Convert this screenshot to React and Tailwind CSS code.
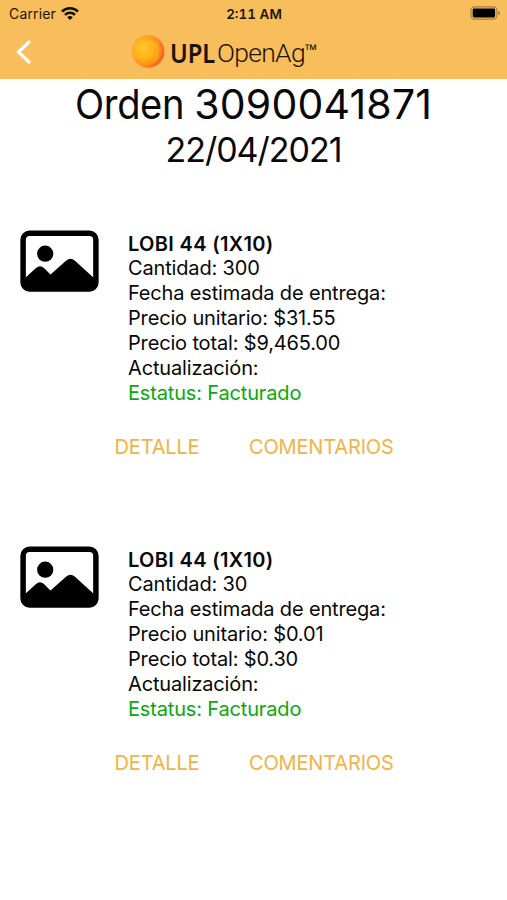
import React from "react";

const orders = [
  { name: "LOBI 44 (1X10)", qty: "300", unit: "$31.55", total: "$9,465.00" },
  { name: "LOBI 44 (1X10)", qty: "30", unit: "$0.01", total: "$0.30" },
];

const WifiIcon = () => (
  <svg width="18" height="14" viewBox="0 0 18 14" fill="none" stroke="#100c04" strokeWidth="2.5">
    <path d="M1 4.6a11.4 11.4 0 0 1 16 0" />
    <path d="M4 7.9a7.1 7.1 0 0 1 10 0" />
    <path d="M9 13.1 6.2 10.3a4 4 0 0 1 5.6 0Z" fill="#100c04" stroke="none" />
  </svg>
);

const BatteryIcon = () => (
  <svg width="31" height="14" viewBox="0 0 31 14">
    <rect x="0.9" y="0.8" width="26" height="12.4" rx="3.6" fill="none" stroke="#a87e3a" strokeWidth="1.2" />
    <rect x="2.7" y="2.6" width="22.4" height="8.8" rx="1.3" fill="#000" />
    <path d="M28.2 4.9c2.6.8 2.6 3.4 0 4.2Z" fill="#a87e3a" />
  </svg>
);

const Sun = () => (
  <svg width="36" height="36" viewBox="0 0 36 36">
    <defs>
      <radialGradient id="sun" cx="0.36" cy="0.42" r="0.68">
        <stop offset="0" stopColor="#ffc62c" />
        <stop offset="0.45" stopColor="#ffb31a" />
        <stop offset="0.78" stopColor="#fd8a10" />
        <stop offset="1" stopColor="#f04a22" />
      </radialGradient>
      <radialGradient id="halo">
        <stop offset="0.85" stopColor="#f0846a" stopOpacity="0.8" />
        <stop offset="1" stopColor="#f5a268" stopOpacity="0" />
      </radialGradient>
    </defs>
    <circle cx="18.6" cy="17.6" r="17.8" fill="url(#halo)" />
    <circle cx="18.2" cy="17.6" r="15.8" fill="url(#sun)" />
    <path d="M7 15c4-6 12-8 19-5 3 5 2 13-2 18" fill="none" stroke="#ffd34a" strokeWidth="1.5" opacity="0.35" />
  </svg>
);

const ImageIcon = () => (
  <svg className="shrink-0" width="79" height="62" viewBox="0 0 79 62">
    <rect x="3.1" y="3.2" width="72.8" height="55.8" rx="6.5" fill="#fff" stroke="#000" strokeWidth="5.5" />
    <circle cx="25.2" cy="23.7" r="8.1" />
    <path d="M4 49 16 38q4-3.600 8 0L30.500 44.500 46.300 30.500q4.200-3.600 8.400 0L75 49v7q0 3-3 3H7q-3 0-3-3Z" />
  </svg>
);

const OrderItem = ({ order }) => (
  <article className="h-[316px]">
    <div className="flex pl-[20px]">
      <ImageIcon />
      <div className="ml-[29px] mt-[1.6px] whitespace-nowrap text-[20px] leading-[24.85px] tracking-[-0.16px]">
        <h3 className="font-semibold tracking-[0.33px]">{order.name}</h3>
        <p>Cantidad: {order.qty}</p>
        <p>Fecha estimada de entrega:</p>
        <p>Precio unitario: {order.unit}</p>
        <p>Precio total: {order.total}</p>
        <p>Actualización:</p>
        <p className="text-[#0aa80f]">Estatus: Facturado</p>
      </div>
    </div>
    <div className="mt-[29px] flex pl-[114.500px] text-[20px] leading-[25px] tracking-[-0.16px] text-[#f3b344]">
      <button className="w-[134.500px] text-left">DETALLE</button>
      <button>COMENTARIOS</button>
    </div>
  </article>
);

const App = () => {
  return (
    <div className="h-[900px] w-full overflow-hidden bg-white font-['Inter',sans-serif] text-[#080808]">
      <header className="h-[79px] bg-[#f7be5b]">
        {/* Status bar */}
        <div className="grid h-[27px] grid-cols-3 items-center pl-[9px] pr-[6px] text-[14px] text-[#1c150a]">
          <div className="flex items-center gap-[5px] tracking-[0.15px]">
            <span>Carrier</span>
            <WifiIcon />
          </div>
          <span className="pr-[2px] pt-[1px] text-center text-[13.5px] font-semibold tabular-nums">2:11 AM</span>
          <div className="flex justify-end pb-[1px]">
            <BatteryIcon />
          </div>
        </div>

        {/* Navigation bar */}
        <div className="flex h-[50px] items-center">
          <button className="ml-[16px] w-[114px]">
            <svg width="15" height="24" viewBox="0 0 15 24" fill="none" stroke="#fff" strokeWidth="3.2" strokeLinecap="round">
              <path d="M13 2 2.500 12 13 22" />
            </svg>
          </button>
          <Sun />
          <div className="ml-[4px] flex items-center whitespace-nowrap pt-[2px] text-[27px] leading-[36px] text-[#1b1309]">
            <span className="w-[47px] origin-left scale-x-[0.88] pb-[1px] font-['Noto_Sans',sans-serif] font-semibold">UPL</span>
            <span className="font-['Roboto',sans-serif] text-[26.5px] font-light tracking-[-0.7px]">OpenAg</span>
            <span className="pb-[6px] font-['Open_Sans',sans-serif] text-[16px] font-semibold leading-[30px]">™</span>
          </div>
        </div>
      </header>

      <main>
        <h1 className="flex justify-center text-[41px] leading-[50px]">
          <span className="w-[119.500px] origin-left scale-x-[0.93] tracking-[-0.4px]">Orden</span>
          <span className="tracking-[0.2px]">3090041871</span>
        </h1>
        <h2 className="text-center text-[34px] leading-[41px] tracking-[-1px]">22/04/2021</h2>
        <section className="mt-[60px]">
          {orders.map((order, i) => (
            <OrderItem key={i} order={order} />
          ))}
        </section>
      </main>
    </div>
  );
};

export default App;
